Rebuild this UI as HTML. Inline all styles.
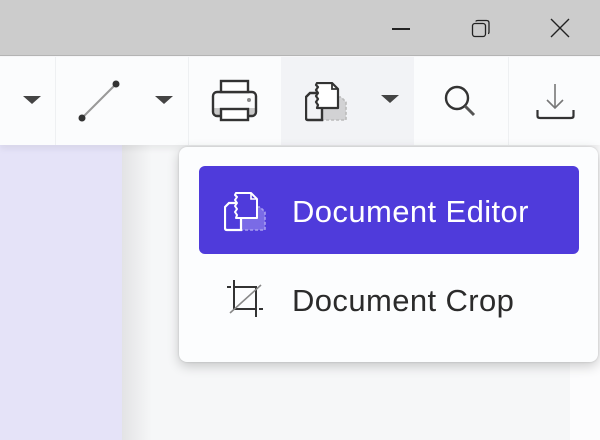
<!DOCTYPE html>
<html><head><meta charset="utf-8"><style>
*{margin:0;padding:0;box-sizing:border-box}
body{width:600px;height:440px;overflow:hidden;position:relative;background:#f6f7f8;font-family:"Liberation Sans",sans-serif}
.abs{position:absolute}
.mt{font-size:31px;line-height:36px;letter-spacing:0.4px;white-space:nowrap}
</style></head><body>
<div class="abs" style="left:0;top:145px;width:122px;height:295px;background:#e5e3f8"></div>
<div class="abs" style="left:122px;top:145px;width:30px;height:295px;background:linear-gradient(90deg,#e3e3e5,#f6f7f8)"></div>
<div class="abs" style="left:570px;top:145px;width:30px;height:295px;background:#fcfcfd"></div>
<div class="abs" style="left:0;top:0;width:600px;height:56px;background:#cccccc;border-bottom:1px solid #b4b4b4"></div>
<div class="abs" style="left:392px;top:28px;width:18px;height:1.5px;background:#222"></div>
<svg class="abs" style="left:470px;top:18px" width="22" height="22" viewBox="0 0 22 22"><rect x="2.5" y="5.5" width="13" height="13" rx="2.5" fill="none" stroke="#222" stroke-width="1.3"/><path d="M6 3.5 Q6 2.5 8 2.5 H16.5 Q19 2.5 19 5 V14 Q19 15.5 18 15.5" fill="none" stroke="#222" stroke-width="1.3"/></svg>
<svg class="abs" style="left:550px;top:18px" width="20" height="20" viewBox="0 0 20 20"><path d="M1 1L19 19M19 1L1 19" stroke="#222" stroke-width="1.4"/></svg>
<div class="abs" style="left:0;top:57px;width:600px;height:88px;background:#fbfcfd;box-shadow:0 4px 6px rgba(0,0,0,0.06)"></div>
<div class="abs" style="left:281px;top:57px;width:133px;height:88px;background:#f2f3f6"></div>
<div class="abs" style="left:55px;top:57px;width:1px;height:88px;background:#eef0f2"></div>
<div class="abs" style="left:188px;top:57px;width:1px;height:88px;background:#eef0f2"></div>
<div class="abs" style="left:508px;top:57px;width:1px;height:88px;background:#eef0f2"></div>
<svg class="abs" style="left:0;top:57px" width="600" height="88" viewBox="0 57 600 88">
<path d="M23 96H41L32 104Z M155 96H173L164 104Z M381 95H399L390 103Z" fill="#444"/>
<line x1="82" y1="118" x2="116" y2="84" stroke="#999" stroke-width="2"/>
<circle cx="82" cy="118" r="3.5" fill="#333"/><circle cx="116" cy="84" r="3.5" fill="#333"/>
<path d="M213 108 H256 V113 Q256 116 253 116 H216 Q213 116 213 113Z" fill="#c8c8c8"/>
<rect x="213" y="92" width="43" height="24" rx="4" fill="none" stroke="#333" stroke-width="2.4"/>
<rect x="221" y="81" width="27" height="11" fill="#fff" stroke="#333" stroke-width="2.4"/>
<rect x="221" y="109" width="27" height="11" fill="#fff" stroke="#333" stroke-width="2.4"/>
<circle cx="249" cy="100" r="2" fill="#888"/>
<circle cx="457" cy="98" r="11" fill="none" stroke="#333" stroke-width="2.4"/>
<line x1="465" y1="106" x2="474" y2="115" stroke="#555" stroke-width="3"/>
<line x1="555" y1="84" x2="555" y2="108" stroke="#777" stroke-width="1.6"/>
<path d="M547 100L555 108L563 100" fill="none" stroke="#777" stroke-width="1.6"/>
<path d="M537.5 110V116Q537.5 118 540 118H571Q573.5 118 573.5 116V110" fill="none" stroke="#333" stroke-width="2.2"/>
</svg>
<svg class="abs" style="left:305px;top:82px" width="44" height="40" viewBox="0 0 44 40">
<path d="M17 15H36L41 20V38H17Z" fill="#d2d2d4"/>
<path d="M33 15H36L41 20V38H17" fill="none" stroke="#bbb" stroke-width="1.6" stroke-dasharray="3 2"/>
<path d="M12 11 H5 L1 15 V36 Q1 38 3 38 H17 V26" fill="none" stroke="#333" stroke-width="2.4"/>
<path d="M12 1 H27 L33 7 V26 H12 L13 23 L11 20 L13 17 L11 14 L13 11 L11 8 L13 5 L11 3Z" fill="#fff" stroke="#333" stroke-width="2.2" stroke-linejoin="round"/>
<path d="M27 1V7H33" fill="none" stroke="#333" stroke-width="1.8"/>
</svg>
<div class="abs" style="left:179px;top:147px;width:419px;height:215px;background:#fcfdfe;border-radius:8px;box-shadow:0 4px 12px rgba(0,0,0,0.2),0 0 2px rgba(0,0,0,0.15)"></div>
<div class="abs" style="left:199px;top:166px;width:380px;height:88px;background:#4f3bdb;border-radius:6px"></div>
<div class="abs mt" style="left:292px;top:194px;color:#fff">Document Editor</div>
<div class="abs mt" style="left:292px;top:283px;color:#2b2b2b">Document Crop</div>
<svg class="abs" style="left:224px;top:192px" width="44" height="40" viewBox="0 0 44 40">
<path d="M17 15H36L41 20V38H17Z" fill="#7a6be6"/>
<path d="M33 15H36L41 20V38H17" fill="none" stroke="#a79df0" stroke-width="1.6" stroke-dasharray="3 2"/>
<path d="M12 11 H5 L1 15 V36 Q1 38 3 38 H17 V26" fill="none" stroke="#fff" stroke-width="2.2"/>
<path d="M12 1 H27 L33 7 V26 H12 L13 23 L11 20 L13 17 L11 14 L13 11 L11 8 L13 5 L11 3Z" fill="#4f3bdb" stroke="#fff" stroke-width="2" stroke-linejoin="round"/>
<path d="M27 1V7H33" fill="none" stroke="#fff" stroke-width="1.6"/>
</svg>
<svg class="abs" style="left:0;top:0" width="600" height="440" viewBox="0 0 600 440">
<path d="M227 287H231 M234 280V309H256 M234 287H256V317 M259 309H263" fill="none" stroke="#333" stroke-width="2"/>
<line x1="230" y1="313" x2="261" y2="285" stroke="#888" stroke-width="1.6"/>
</svg>
</body></html>
